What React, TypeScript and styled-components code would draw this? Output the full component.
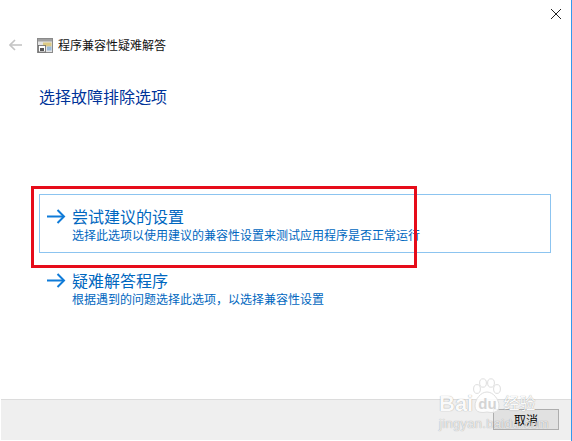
import React, { FC } from 'react';
import styled, { createGlobalStyle } from 'styled-components';

const GlobalStyle = createGlobalStyle`
  html, body {
    margin: 0;
    padding: 0;
    background: #fff;
  }
`;

const cjk = `"Noto Sans CJK SC", "Noto Sans", sans-serif`;

const Window = styled.div`
  position: relative;
  box-sizing: border-box;
  width: 572px;
  height: 441px;
  padding: 0 0 1px 1px;
  display: flex;
  flex-direction: column;
  background: #fff;
  border-right: 1px solid #3399ee;
  font-family: ${cjk};
  overflow: hidden;
`;

const TopBar = styled.div`
  height: 28px;
  display: flex;
  justify-content: flex-end;
  align-items: flex-start;
  padding: 9px 10px 0 0;
  box-sizing: border-box;
`;

const NavRow = styled.div`
  height: 34px;
  display: flex;
  align-items: center;
  gap: 5px;
  padding-left: 8px;
`;

const BackSlot = styled.div`
  width: 23px;
  line-height: 0;
`;

const AppName = styled.span`
  font-size: 12px;
  line-height: 16px;
  color: #111;
`;

const Heading = styled.h1`
  margin: 23px 0 0 38px;
  font-size: 16px;
  font-weight: 400;
  line-height: 22px;
  color: #003399;
`;

const Options = styled.div`
  margin: 87px 20px 0 38px;
  display: flex;
  flex-direction: column;
  gap: 5px;
`;

const Option = styled.div<{ $active?: boolean }>`
  box-sizing: border-box;
  height: 59px;
  padding: 10px 0 0 7px;
  display: flex;
  gap: 6px;
  border: 1px solid ${(p) => (p.$active ? '#8cc4f0' : 'transparent')};
`;

const ArrowWrap = styled.div`
  padding-top: 4px;
  line-height: 0;
`;

const OptionText = styled.div`
  display: flex;
  flex-direction: column;
  color: #0067c0;
`;

const OptionTitle = styled.span`
  font-size: 16px;
  line-height: 22px;
`;

const OptionDesc = styled.span`
  font-size: 12px;
  line-height: 16px;
`;

const Footer = styled.div`
  margin-top: auto;
  box-sizing: border-box;
  height: 41px;
  padding: 9px 12px 0 0;
  display: flex;
  justify-content: flex-end;
  align-items: flex-start;
  background: #efefef;
  border-top: 1px solid #dcdcdc;
`;

const CancelButton = styled.button`
  box-sizing: border-box;
  width: 66px;
  height: 21px;
  padding: 0;
  border: 1px solid #adadad;
  background: #e1e1e1;
  font-family: ${cjk};
  font-size: 12px;
  line-height: 17px;
  color: #000;
`;

const Highlight = styled.div`
  position: absolute;
  left: 31px;
  top: 186px;
  width: 386px;
  height: 82px;
  box-sizing: border-box;
  border: 3px solid #e60c1a;
`;

const Watermark = styled.div`
  position: absolute;
  left: 439px;
  top: 378px;
  width: 112px;
  color: #fafafa;
  font-family: "Liberation Sans", ${cjk};
  text-shadow: 0 0 1px rgba(0, 0, 0, 0.4);
  pointer-events: none;
`;

const Paw = styled.svg`
  position: absolute;
  left: 33px;
  top: 0;
`;

const Brand = styled.div`
  display: flex;
  align-items: center;
  margin-top: 16px;
  height: 20px;
  font-size: 22px;
  font-weight: 700;
  line-height: 20px;
`;

const BrandDu = styled.span`
  position: relative;
  margin-left: 3px;
  padding: 0 2px;
  font-size: 15px;
  line-height: 18px;
  color: #d4d4d4;
  text-shadow: none;
`;

const BrandSuffix = styled.span`
  margin-left: 5px;
  font-size: 16px;
  font-weight: 400;
`;

const BrandUrl = styled.div`
  margin-top: 3px;
  font-size: 13px;
  line-height: 13px;
  letter-spacing: 0.3px;
  white-space: nowrap;
  color: rgba(250, 250, 250, 0.8);
`;

const RightArrow: FC = () => (
  <svg width="19" height="15" viewBox="0 0 19 15" fill="none" stroke="#0f7bd8" strokeWidth="2">
    <path d="M0 7.5h17" />
    <path d="M10.5 1l6.5 6.5-6.5 6.5" />
  </svg>
);

const BackArrow: FC = () => (
  <svg width="13" height="12" viewBox="0 0 13 12" fill="none" stroke="#c4c4c4" strokeWidth="1.6">
    <path d="M1 6h12" />
    <path d="M6 1L1 6l5 5" />
  </svg>
);

const CloseIcon: FC = () => (
  <svg width="10" height="10" viewBox="0 0 10 10" fill="none" stroke="#222" strokeWidth="1">
    <path d="M0 0l10 10M10 0L0 10" />
  </svg>
);

const AppIcon: FC = () => (
  <svg width="16" height="15" viewBox="0 0 16 15">
    <rect x="0.5" y="0.5" width="15" height="14" fill="#e4e4e4" stroke="#8a8a8a" />
    <rect x="1" y="1" width="14" height="2.5" fill="#a0a0a0" />
    <rect x="6" y="4.5" width="8.5" height="4" fill="#dcca84" />
    <rect x="10" y="8.5" width="4.5" height="4" fill="#9dbbd8" />
    <rect x="1.5" y="7.5" width="7" height="6.5" fill="#fff" stroke="#666" strokeWidth="0.8" />
    <rect x="3" y="10" width="4" height="3" fill="#555" />
  </svg>
);

const App: FC = () => (
  <>
    <GlobalStyle />
    <Window>
      <TopBar>
        <CloseIcon />
      </TopBar>
      <NavRow>
        <BackSlot>
          <BackArrow />
        </BackSlot>
        <AppIcon />
        <AppName>程序兼容性疑难解答</AppName>
      </NavRow>
      <Heading>选择故障排除选项</Heading>
      <Options>
        <Option $active>
          <ArrowWrap>
            <RightArrow />
          </ArrowWrap>
          <OptionText>
            <OptionTitle>尝试建议的设置</OptionTitle>
            <OptionDesc>选择此选项以使用建议的兼容性设置来测试应用程序是否正常运行</OptionDesc>
          </OptionText>
        </Option>
        <Option>
          <ArrowWrap>
            <RightArrow />
          </ArrowWrap>
          <OptionText>
            <OptionTitle>疑难解答程序</OptionTitle>
            <OptionDesc>根据遇到的问题选择此选项，以选择兼容性设置</OptionDesc>
          </OptionText>
        </Option>
      </Options>
      <Footer>
        <CancelButton>取消</CancelButton>
      </Footer>
      <Highlight />
      <Watermark>
        <Paw width="30" height="36" viewBox="0 0 30 36" fill="rgba(255,255,255,0.85)" stroke="#dedede" strokeWidth="1">
          <ellipse cx="5" cy="11" rx="3.4" ry="4.4" />
          <ellipse cx="11" cy="5" rx="3.4" ry="4.2" />
          <ellipse cx="19" cy="5" rx="3.4" ry="4.2" />
          <ellipse cx="25" cy="11" rx="3.4" ry="4.4" />
          <path d="M15 14c-6 0-12 7-12 14 0 7 7 7 12 6 5 1 12 1 12-6 0-7-6-14-12-14z" />
        </Paw>
        <Brand>
          Bai
          <BrandDu>du</BrandDu>
          <BrandSuffix>经验</BrandSuffix>
        </Brand>
        <BrandUrl>jingyan.baidu.com</BrandUrl>
      </Watermark>
    </Window>
  </>
);

export default App;
